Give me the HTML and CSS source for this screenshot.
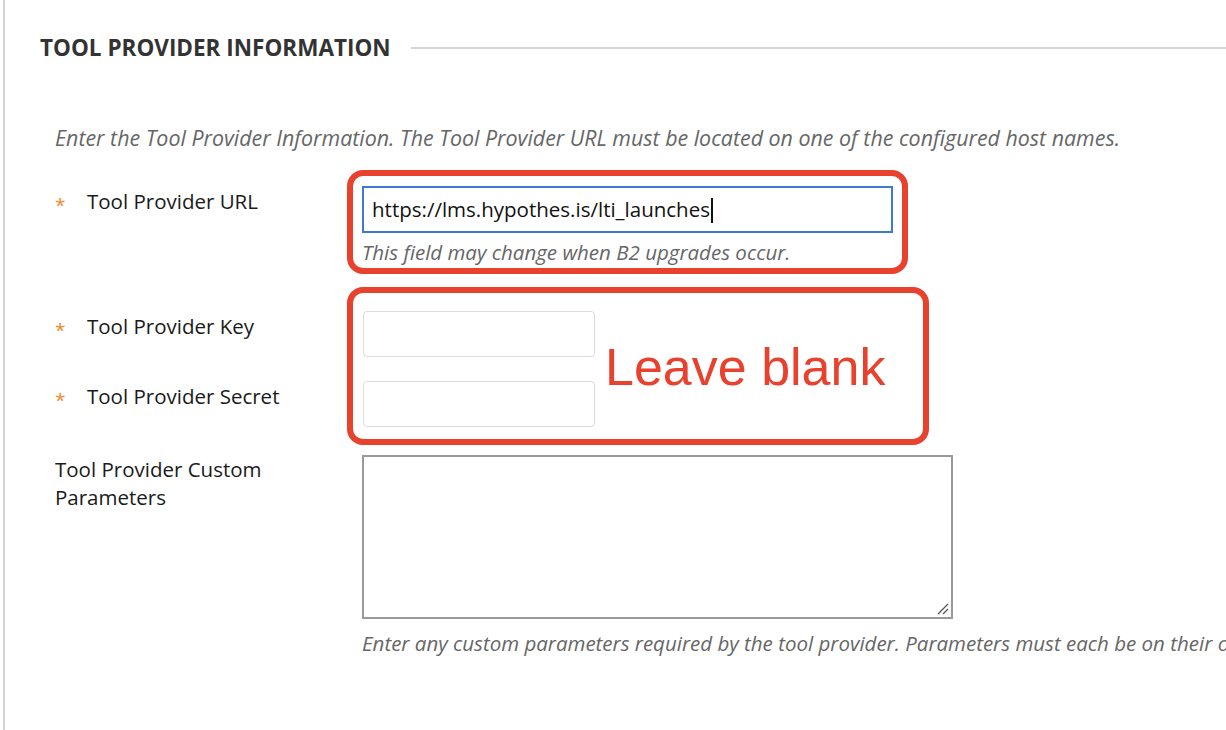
FILE: index.html
```html
<!DOCTYPE html>
<html lang="en">
<head>
  <meta charset="UTF-8">
  <title>Tool Provider Information</title>
  <link rel="stylesheet" href="styles.css">
</head>
<body>
  <div class="panel">
    <h2 class="section-title"><span>TOOL PROVIDER INFORMATION</span></h2>
    <p class="intro">Enter the Tool Provider Information. The Tool Provider URL must be located on one of the configured host names.</p>

    <div class="row">
      <div class="label"><span class="star">*</span>Tool Provider URL</div>
      <div class="callout callout-url">
        <div class="text-input url-input">https://lms.hypothes.is/lti_launches<span class="caret"></span></div>
        <p class="hint">This field may change when B2 upgrades occur.</p>
      </div>
    </div>

    <div class="row group">
      <div class="labels">
        <div class="label"><span class="star">*</span>Tool Provider Key</div>
        <div class="label"><span class="star">*</span>Tool Provider Secret</div>
      </div>
      <div class="callout callout-blank">
        <div class="inputs">
          <div class="text-input small-input"></div>
          <div class="text-input small-input"></div>
        </div>
        <span class="blank-note">Leave blank</span>
      </div>
    </div>

    <div class="row custom-row">
      <div class="label plain">Tool Provider Custom<br>Parameters</div>
      <div class="field">
        <div class="textarea">
          <svg class="grip" width="14" height="14" viewBox="0 0 14 14">
            <path d="M2 12 L12 2 M7 12 L12 7" stroke="#555" stroke-width="1.3" fill="none"/>
          </svg>
        </div>
        <p class="hint nowrap">Enter any custom parameters required by the tool provider. Parameters must each be on their own line.</p>
      </div>
    </div>
  </div>
</body>
</html>
```

FILE: styles.css
```css
html, body {
  margin: 0;
  padding: 0;
  background: #fff;
  overflow: hidden;
}
body {
  font-family: 'Open Sans', 'DejaVu Sans', sans-serif;
  color: #222;
  width: 1226px;
  height: 730px;
}
.panel {
  margin-left: 3px;
  border-left: 2px solid #d2d2d2;
  padding-left: 35px;
  padding-top: 33px;
  height: 730px;
  box-sizing: border-box;
}
.section-title {
  display: flex;
  align-items: center;
  margin: 0;
  font-size: 22.5px;
  line-height: 30px;
  font-weight: 700;
  color: #333;
}
.section-title::after {
  content: '';
  flex: 1;
  height: 2px;
  background: #d4d4d4;
  margin-left: 20px;
}
.intro {
  margin: 62px 0 19px 15px;
  font-size: 21.4px;
  line-height: 26px;
  font-style: italic;
  color: #666;
  white-space: nowrap;
}
.row {
  display: flex;
  margin-left: 15px;
}
.label {
  width: 307px;
  flex: none;
  font-size: 20.5px;
  line-height: 26px;
  padding-top: 18px;
  box-sizing: border-box;
  color: #1a1a1a;
}
.star {
  display: inline-block;
  width: 32px;
  font-size: 19px;
  color: #f0892c;
  position: relative;
  top: 3px;
}
.callout {
  border: 6px solid #e8412e;
  border-radius: 16px;
  margin-left: -15px;
}
.callout-url {
  width: 561px;
  box-sizing: border-box;
  padding: 10px 9px 4px 9px;
}
.text-input {
  box-sizing: border-box;
  border: 1.5px solid #dcdcdc;
  border-radius: 4px;
  background: #fff;
}
.url-input {
  height: 47px;
  border: 2px solid #3c7bd0;
  border-radius: 0;
  padding: 0 8px;
  font-size: 20.5px;
  line-height: 43px;
  color: #111;
  white-space: nowrap;
}
.caret {
  display: inline-block;
  width: 2px;
  height: 25px;
  background: #111;
  vertical-align: -6px;
  margin-left: 1px;
}
.hint {
  margin: 7px 0 0 0;
  font-size: 20.5px;
  line-height: 24px;
  font-style: italic;
  color: #666;
}
.nowrap {
  white-space: nowrap;
}
.group {
  margin-top: 13px;
}
.labels {
  width: 307px;
  flex: none;
  padding-top: 26px;
}
.labels .label {
  padding-top: 0;
  height: 70px;
}
.labels .label + .label {
  height: auto;
}
.callout-blank {
  width: 582px;
  height: 158px;
  box-sizing: border-box;
  padding: 18px 0 0 10px;
  display: flex;
  align-items: flex-start;
}
.inputs {
  display: flex;
  flex-direction: column;
  gap: 24px;
}
.small-input {
  width: 232px;
  height: 46px;
}
.blank-note {
  margin: 28px 0 0 10px;
  font-family: 'Liberation Sans', Arial, sans-serif;
  font-size: 52px;
  line-height: 56px;
  color: #e8412e;
}
.custom-row {
  margin-top: 10px;
}
.label.plain {
  padding-top: 0;
  line-height: 28px;
}
.field {
  flex: none;
}
.textarea {
  position: relative;
  width: 591px;
  height: 164px;
  box-sizing: border-box;
  border: 2px solid #9a9a9a;
}
.grip {
  position: absolute;
  right: 1px;
  bottom: 1px;
}
.custom-row .hint {
  margin-top: 12px;
}
```
